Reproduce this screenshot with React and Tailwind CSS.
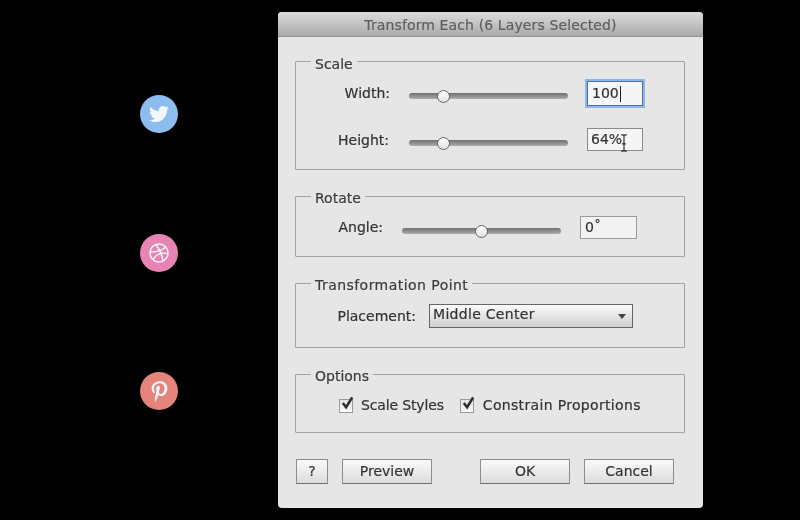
import React from "react";
import { FaTwitter, FaDribbble, FaPinterestP } from "react-icons/fa";

function Social({ bg, children, className = "" }) {
  return (
    <div className={`flex h-[38px] w-[38px] items-center justify-center rounded-full text-[#f4f7fa] ${className}`} style={{ backgroundColor: bg }}>
      {children}
    </div>
  );
}

function Group({ title, className, legend = "pt-[5px] pb-[1px]", children }) {
  return (
    <fieldset className={`rounded-[1px] border border-[#a3a3a3] ${className}`}>
      <legend className={`ml-[15px] px-[4px] text-[14px] leading-[14px] text-[#3c3c3c] ${legend}`}>{title}</legend>
      {children}
    </fieldset>
  );
}

function Slider({ thumb }) {
  return (
    <div className="relative h-[14px] w-[159px] shrink-0">
      <div className="absolute left-0 right-0 top-[4px] h-[6px] rounded-full bg-gradient-to-b from-[#707070] to-[#adadad]" />
      <div className="absolute top-[1px] h-[13px] w-[13px] rounded-full border border-[#666] bg-gradient-to-b from-[#ffffff] to-[#e2e2e2]" style={{ left: thumb }} />
    </div>
  );
}

function Btn({ w, children }) {
  return (
    <div className={`flex h-[25px] items-center justify-center border border-[#8c8c8c] border-b-[#6f6f6f] bg-gradient-to-b from-[#fafafa] to-[#dcdcdc] text-[14px] text-[#333] ${w}`}>
      {children}
    </div>
  );
}

function Check({ className = "" }) {
  return (
    <div className={`relative h-[14px] w-[14px] shrink-0 border border-[#9a9a9a] bg-gradient-to-b from-[#e4e4e4] to-[#fafafa] ${className}`}>
      <svg viewBox="0 0 16 16" className="absolute left-[0px] top-[-5px] h-[16px] w-[15px]" fill="none" stroke="#2f2f2f" strokeWidth="2.8">
        <path d="M3 8l3.5 4.5L13 2" />
      </svg>
    </div>
  );
}

export default function App() {
  return (
    <div className="flex h-[520px] w-[800px] overflow-hidden bg-black pl-[140px] [font-family:'DejaVu_Sans',sans-serif] [-webkit-text-stroke:0.2px] blur-[0.4px]">
      <div className="mr-[100px] flex w-[38px] flex-col pt-[95px]">
        <Social bg="#8dbcee"><FaTwitter size={20} /></Social>
        <Social bg="#e884b3" className="mt-[101px]"><FaDribbble size={20} /></Social>
        <Social bg="#e5847b" className="mt-[100px]"><FaPinterestP size={21} /></Social>
      </div>

      <div className="mt-[12px] flex h-[496px] w-[425px] flex-col overflow-hidden rounded-[4px] bg-[#e6e6e6]">
        <div className="flex h-[25px] shrink-0 items-center justify-center border-b border-[#8f8f8f] bg-gradient-to-b from-[#dcdcdc] to-[#aaaaaa] pt-[2px] text-[14px] tracking-[0.12px] text-[#5f5f5f]">
          Transform Each (6 Layers Selected)
        </div>

        <div className="flex flex-col pl-[17px] pr-[18px] pt-[14px]">
          <Group title="Scale" legend="pt-[6px]" className="h-[119px]">
            <div className="mt-[10px] flex h-[25px] items-center">
              <div className="w-[94px] text-right text-[14px] text-[#333]">Width:</div>
              <div className="ml-[19px] mt-[5px]"><Slider thumb="28px" /></div>
              <div className="ml-[19px] flex h-[25px] w-[56px] items-center border border-[#50729c] bg-[#f5f5f5] pl-[4px] text-[14px] text-[#333] ring-2 ring-[#8db5e8]">
                100<span className="ml-[1px] h-[16px] w-[1px] bg-[#222]" />
              </div>
            </div>
            <div className="mt-[22px] flex h-[23px] items-center">
              <div className="w-[93px] pt-[1px] text-right text-[14px] text-[#333]">Height:</div>
              <div className="ml-[20px] mt-[7px]"><Slider thumb="28px" /></div>
              <div className="relative ml-[19px] flex h-[23px] w-[56px] items-center border border-[#8a8a8a] bg-[#f5f5f5] pl-[3px] text-[14px] text-[#333]">
                64%
                <svg viewBox="0 0 10 20" className="absolute left-[31px] top-[5px] h-[18px] w-[10px]" fill="none" stroke="#222" strokeWidth="1.2">
                  <path d="M2 1h2l1 1 1-1h2M5 2v16M2 19h2l1-1 1 1h2M3 11h4" />
                </svg>
              </div>
            </div>
          </Group>

          <Group title="Rotate" className="mt-[16px] h-[71px]">
            <div className="mt-[10px] flex h-[23px] items-center">
              <div className="w-[87px] text-right text-[14px] text-[#333]">Angle:</div>
              <div className="ml-[19px] mt-[7px]"><Slider thumb="73px" /></div>
              <div className="ml-[19px] flex h-[23px] w-[57px] items-center border border-[#9a9a9a] bg-[#f2f2f2] pl-[4px] text-[14px] text-[#333]">0˚</div>
            </div>
          </Group>

          <Group title="Transformation Point" legend="pt-[5px] pb-[1px] tracking-[0.45px]" className="mt-[16px] h-[75px]">
            <div className="mt-[11px] flex h-[24px] items-center">
              <div className="w-[120px] text-right text-[14px] text-[#333]">Placement:</div>
              <div className="ml-[13px] flex h-[24px] w-[204px] items-center justify-between border border-[#666] bg-gradient-to-b from-[#fbfbfb] to-[#cfcfcf] pl-[3px] pr-[6px] text-[14px] tracking-[0.3px] text-[#333]">
                <span className="-mt-[3px]">Middle Center</span>
                <svg viewBox="0 0 8 5" className="h-[5px] w-[8px]"><path d="M0 0h8L4 5z" fill="#444" /></svg>
              </div>
            </div>
          </Group>

          <Group title="Options" className="mt-[16px] h-[69px]">
            <div className="mt-[11px] flex items-center text-[14px] text-[#333]">
              <Check className="ml-[43px]" />
              <span className="ml-[8px] tracking-[-0.15px]">Scale Styles</span>
              <Check className="ml-[16px]" />
              <span className="ml-[9px] tracking-[0.33px]">Constrain Proportions</span>
            </div>
          </Group>

          <div className="mt-[26px] flex pl-[1px]">
            <Btn w="w-[32px]">?</Btn>
            <Btn w="w-[90px] ml-[14px]">Preview</Btn>
            <Btn w="w-[90px] ml-[48px]">OK</Btn>
            <Btn w="w-[90px] ml-[14px]">Cancel</Btn>
          </div>
        </div>
      </div>
    </div>
  );
}
